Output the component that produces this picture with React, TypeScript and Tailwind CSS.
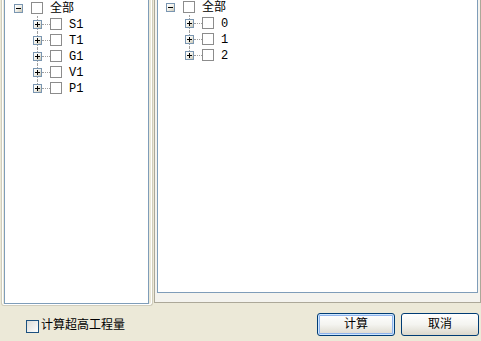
import React from 'react';

const FONT = "font-['Liberation_Mono','Noto_Sans_CJK_SC',monospace]";

function Expander({ open }: { open: boolean }) {
  return (
    <div className="relative flex h-[9px] w-[9px] shrink-0 items-center justify-center border border-[#7a96b1] bg-gradient-to-br from-white via-[#f2f1ea] to-[#c9c6b5]">
      <div className="h-px w-[5px] bg-black" />
      {!open ? <div className="absolute left-[3px] top-[1px] h-[5px] w-px bg-black" /> : null}
    </div>
  );
}

function TreeCheck() {
  return <div className="h-3 w-3 shrink-0 border border-[#8c8c8c] bg-white" />;
}

function Tree({ items, className }: { items: string[]; className: string }) {
  return (
    <div className={`${FONT} text-[12px] leading-4 text-black ${className}`}>
      <div className="flex h-4 items-center">
        <div className="ml-[8px]">
          <Expander open />
        </div>
        <div className="ml-2">
          <TreeCheck />
        </div>
        <span className="ml-[7px] mt-[2px]">全部</span>
      </div>
      {items.map((label, i) => (
        <div key={label} className="relative flex h-4 items-center">
          {/* connector lines */}
          <div
            className={`absolute left-[31px] top-0 w-0 border-l border-dotted border-[#a0a0a0] ${
              i === items.length - 1 ? 'h-[4px]' : 'h-4'
            }`}
          />
          <div className="ml-[27px]">
            <Expander open={false} />
          </div>
          <div className="h-0 w-[8px] border-t border-dotted border-[#a0a0a0]" />
          <TreeCheck />
          <span className="ml-[7px] mt-[2px]">{label}</span>
        </div>
      ))}
    </div>
  );
}

function XpButton({ label, primary }: { label: string; primary?: boolean }) {
  return (
    <button
      type="button"
      className={`flex h-[23px] w-[78px] items-center justify-center rounded-[3px] border border-[#003c74] bg-gradient-to-b from-white via-[#f4f4f0] to-[#dcd8cc] pt-px text-[12px] text-black ${FONT} ${
        primary ? 'shadow-[inset_0_0_0_1px_#cee7ff,inset_0_0_0_2px_#8fb3ec]' : ''
      }`}
    >
      {label}
    </button>
  );
}

export default function App() {
  return (
    <div className="flex h-[341px] w-[481px] flex-col overflow-hidden bg-[#ece9d8]">
      <div className="flex h-[307px] shrink-0">
        {/* left panel */}
        <div className="w-[154px] shrink-0 pl-px">
          <div className="h-[306px] w-[152px] rounded-b-[3px] border-x border-b border-[#d0cdbc] pl-[2px] shadow-[inset_1px_0_0_#fff,inset_-1px_-1px_0_#fff]">
            <div className="h-[304px] w-[145px] border-x border-b border-[#7f9db9] bg-white">
              <Tree items={['S1', 'T1', 'G1', 'V1', 'P1']} className="pl-px" />
            </div>
          </div>
        </div>

        {/* right panel */}
        <div className="h-[303px] w-[327px] shrink-0 border-x border-b border-[#aca899] bg-[#f4f3ee] px-[2px]">
          <div className="h-[294px] w-[321px] border-x border-b border-[#7f9db9] bg-white">
            <Tree items={['0', '1', '2']} className="-mt-px" />
          </div>
        </div>
      </div>

      {/* bottom bar */}
      <div className="flex flex-1 items-start">
        <label className={`ml-[26px] mt-[13px] flex items-center text-[12px] leading-[13px] text-black ${FONT}`}>
          <span className="h-[13px] w-[13px] border border-[#1c5180] bg-gradient-to-br from-[#dcdcd7] to-white" />
          <span className="ml-[2px]">计算超高工程量</span>
        </label>
        <div className="ml-auto mr-[2px] mt-[6px] flex gap-[6px]">
          <XpButton label="计算" primary />
          <XpButton label="取消" />
        </div>
      </div>
    </div>
  );
}
